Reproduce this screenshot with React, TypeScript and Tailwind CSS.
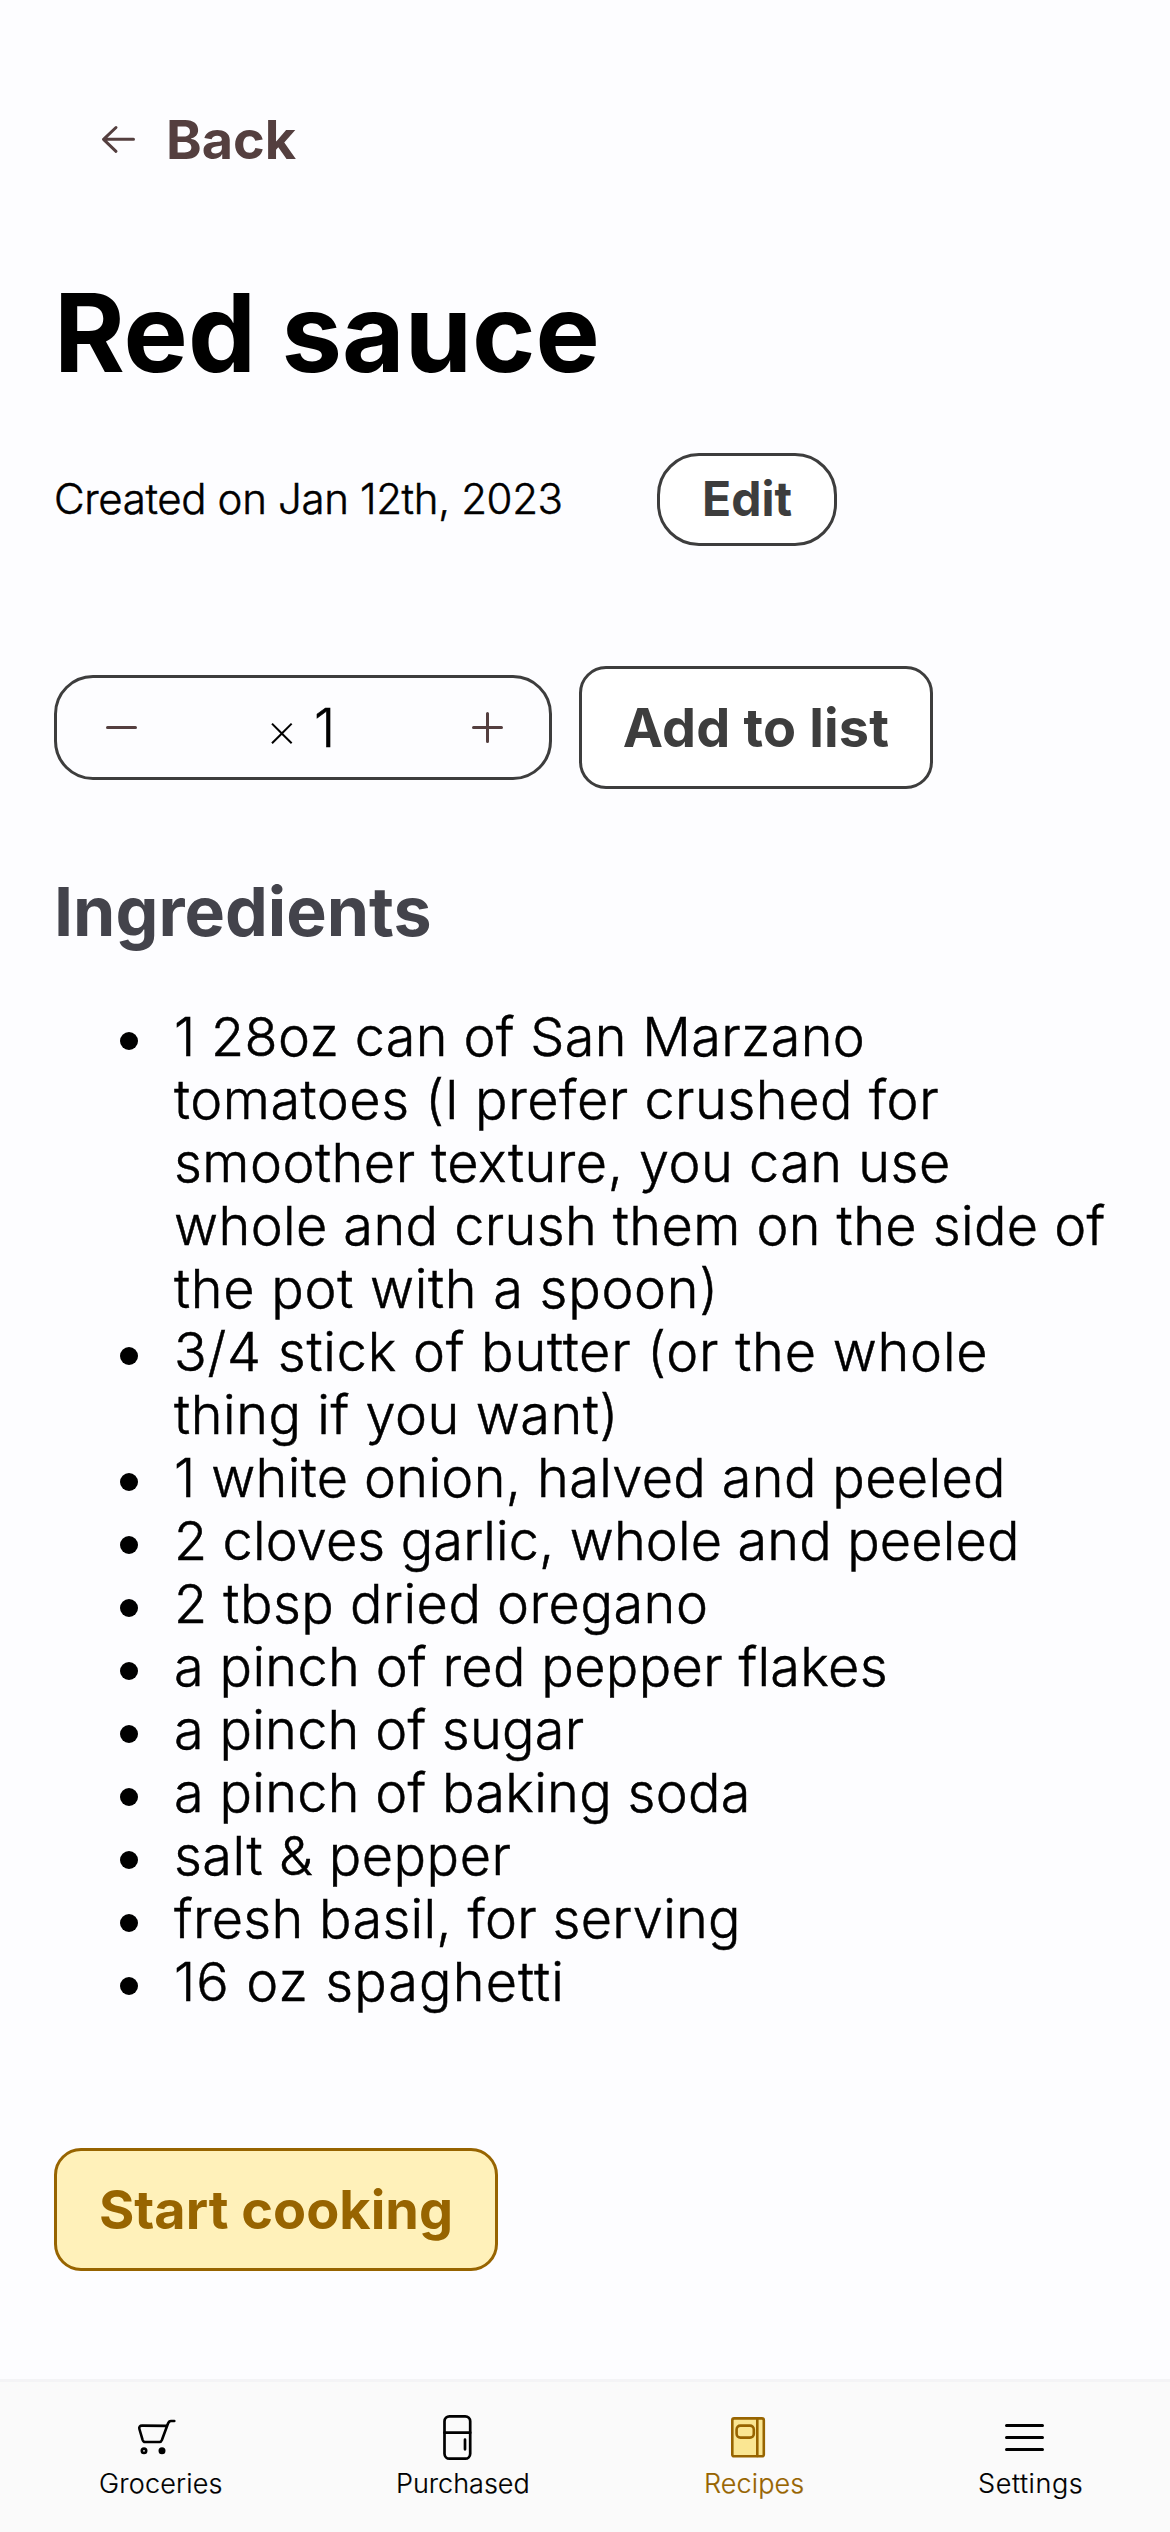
import React from "react";

type Line = { text: string; tracking: string };

const ingredients: Line[][] = [
  [
    { text: "1 28oz can of San Marzano", tracking: "tracking-[0.34px]" },
    { text: "tomatoes (I prefer crushed for", tracking: "tracking-[0.54px]" },
    { text: "smoother texture, you can use", tracking: "tracking-[0.49px]" },
    { text: "whole and crush them on the side of", tracking: "tracking-[0.41px]" },
    { text: "the pot with a spoon)", tracking: "tracking-[0.72px]" },
  ],
  [
    { text: "3/4 stick of butter (or the whole", tracking: "tracking-[0.78px]" },
    { text: "thing if you want)", tracking: "tracking-[0.56px]" },
  ],
  [{ text: "1 white onion, halved and peeled", tracking: "tracking-[0.36px]" }],
  [{ text: "2 cloves garlic, whole and peeled", tracking: "tracking-[0.14px]" }],
  [{ text: "2 tbsp dried oregano", tracking: "tracking-[0.5px]" }],
  [{ text: "a pinch of red pepper flakes", tracking: "tracking-[0.34px]" }],
  [{ text: "a pinch of sugar", tracking: "tracking-[0.28px]" }],
  [{ text: "a pinch of baking soda", tracking: "tracking-[0.3px]" }],
  [{ text: "salt & pepper", tracking: "tracking-[0.5px]" }],
  [{ text: "fresh basil, for serving", tracking: "tracking-[0.3px]" }],
  [{ text: "16 oz spaghetti", tracking: "tracking-[1.1px]" }],
];

const line = {
  fill: "none",
  stroke: "currentColor",
  strokeWidth: 3,
  strokeLinecap: "round" as const,
  strokeLinejoin: "round" as const,
};

function ArrowLeft() {
  return (
    <svg className="h-[45px] w-[45px]" viewBox="0 0 45 45" {...line}>
      <path d="M35.500 22.300H5.500M18 10.500L5.500 22.300L18 34.300" />
    </svg>
  );
}

function Cart() {
  return (
    <svg className="h-[45px] w-[45px]" viewBox="0 0 45 45" {...line} strokeWidth={2.6}>
      <path d="M32 10.900L8 10.600C6 10.600 4.800 12 5.400 14L8.600 24.800C9.100 26.300 9.800 27 11 27H25.500C26.800 27 27.300 26.500 27.900 25L34 8.500C34.600 6.800 35.300 6 37 6H40.300" />
      <circle cx="10" cy="35.800" r="2.200" />
      <circle cx="28" cy="35.800" r="2.200" fill="currentColor" />
    </svg>
  );
}

function Fridge() {
  return (
    <svg className="h-[45px] w-[45px]" viewBox="0 0 45 45" {...line} strokeWidth={2.7}>
      <rect x="9.500" y="1.350" width="25.700" height="42.300" rx="5" />
      <path d="M9.500 17.700H35.200M30 24.700V34.300" />
    </svg>
  );
}

function Book() {
  return (
    <svg className="h-[45px] w-[45px]" viewBox="0 0 45 45" {...line} strokeWidth={2.6}>
      <rect x="6.300" y="3.400" width="31.500" height="37.800" rx="1.800" fill="#fae692" />
      <path d="M31.300 4V41" />
      <rect x="10.600" y="10.600" width="17.200" height="12" rx="3.800" />
    </svg>
  );
}

function Menu() {
  return (
    <svg className="h-[45px] w-[45px]" viewBox="0 0 45 45" {...line}>
      <path d="M4.500 10.400H40.500M4.500 22.400H40.500M4.500 34.400H40.500" />
    </svg>
  );
}

export default function App() {
  return (
    <div className="flex h-[2532px] w-[1170px] flex-col bg-[#fdfdff] font-['Inter',sans-serif] text-[54px] leading-[63px] font-light text-black">
      <main className="flex grow flex-col items-start px-[54px] pt-[108px]">
        <button className="flex h-[63px] items-center gap-[23px] pl-[44px] font-bold text-[#543f3f]">
          <ArrowLeft />
          <span>Back</span>
        </button>

        <h1 className="mt-[96px] text-[108px] leading-[132px] font-bold">Red sauce</h1>

        <div className="mt-[54px] flex h-[93px] items-center">
          <p className="w-[603px] pb-[3px] text-[42px] tracking-[-0.35px] [-webkit-text-stroke:0.5px_black]">
            Created on Jan 12th, 2023
          </p>
          <button className="h-[93px] w-[180px] rounded-[42px] border-[3px] border-[#3d3d3d] bg-white pb-[2px] text-[48px] font-bold text-[#3d3d3d]">
            Edit
          </button>
        </div>

        <div className="mt-[120px] flex items-center gap-[27px]">
          <div className="flex h-[105px] w-[498px] items-center rounded-[39px] border-[3px] border-[#3d3d3d] pr-[39px] pl-[42px] text-[#543f3f]">
            <svg className="h-[45px] w-[45px]" viewBox="0 0 45 45" {...line}>
              <path d="M8.500 22.500H36.500" />
            </svg>
            <div className="ml-[122px] flex items-center text-black">
              <span className="w-[48px] pt-[3px] text-[49px] font-extralight">×</span>
              <span className="[-webkit-text-stroke:0.5px_black]">1</span>
            </div>
            <svg className="ml-auto h-[45px] w-[45px]" viewBox="0 0 45 45" {...line}>
              <path d="M8.500 22.500H36.500M22.500 8.500V36.500" />
            </svg>
          </div>
          <button className="h-[123px] w-[354px] rounded-[27px] border-[3px] border-[#3d3d3d] bg-white font-bold tracking-[0.2px] text-[#3d3d3d]">
            Add to list
          </button>
        </div>

        <h2 className="mt-[82px] text-[68px] leading-[81px] font-bold text-[#43434b]">Ingredients</h2>

        <ul className="mt-[53px] flex flex-col pl-[66px] whitespace-nowrap [-webkit-text-stroke:0.5px_black]">
          {ingredients.map((lines) => (
            <li key={lines[0].text} className="flex items-start gap-[36px]">
              <span className="mt-[27px] size-[18px] rounded-full bg-black" />
              <p className="flex flex-col">
                {lines.map((l) => (
                  <span key={l.text} className={l.tracking}>
                    {l.text}
                  </span>
                ))}
              </p>
            </li>
          ))}
        </ul>

        <button className="mt-[135px] h-[123px] w-[444px] rounded-[27px] border-[3px] border-[#976400] bg-[#fff1ba] font-bold text-[#976400]">
          Start cooking
        </button>
      </main>

      <nav className="flex h-[153px] shrink-0 border-t-[3px] border-[#f4f4f6] bg-[#fafafa] pt-[33px] pl-[99px] text-[27px] leading-[33px] [-webkit-text-stroke:0.2px_currentColor]">
        <a className="flex w-[297px] flex-col gap-[7px]">
          <span className="pl-[35px]"><Cart /></span>
          <span className="tracking-[0.2px]">Groceries</span>
        </a>
        <a className="flex w-[308px] flex-col gap-[7px]">
          <span className="pl-[39px]"><Fridge /></span>
          <span>Purchased</span>
        </a>
        <a className="flex w-[274px] flex-col gap-[7px] text-[#976400]">
          <span className="pl-[22px]"><Book /></span>
          <span className="tracking-[0.1px]">Recipes</span>
        </a>
        <a className="flex flex-col gap-[7px]">
          <span className="pl-[24px]"><Menu /></span>
          <span className="tracking-[0.6px]">Settings</span>
        </a>
      </nav>
    </div>
  );
}
